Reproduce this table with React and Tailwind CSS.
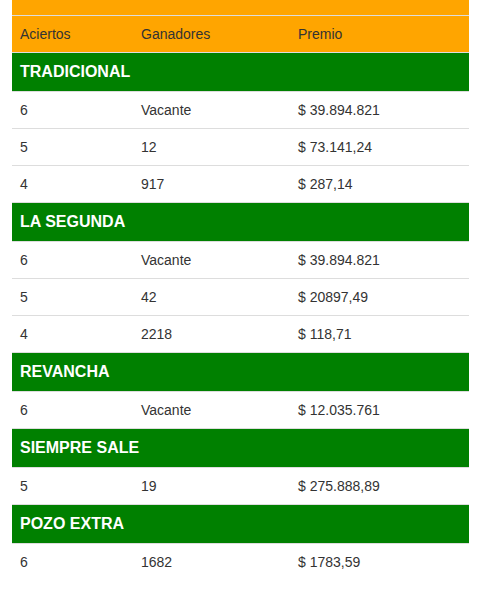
import React from "react";

const sections = [
  { title: "TRADICIONAL", rows: [["6", "Vacante", "$ 39.894.821"], ["5", "12", "$ 73.141,24"], ["4", "917", "$ 287,14"]] },
  { title: "LA SEGUNDA", rows: [["6", "Vacante", "$ 39.894.821"], ["5", "42", "$ 20897,49"], ["4", "2218", "$ 118,71"]] },
  { title: "REVANCHA", rows: [["6", "Vacante", "$ 12.035.761"]] },
  { title: "SIEMPRE SALE", rows: [["5", "19", "$ 275.888,89"]] },
  { title: "POZO EXTRA", rows: [["6", "1682", "$ 1783,59"]] },
];

function Row({ cells, className }) {
  return (
    <div className={"grid grid-cols-[121px_157px_179px] border-t border-[#dddddd] " + className}>
      {cells.map((c, i) => (
        <div key={i} className="px-2 py-2 leading-5 h-[36px] box-border">{c}</div>
      ))}
    </div>
  );
}

export default function App() {
  return (
    <div className="bg-white w-[482px] h-[599px] px-3 text-[14px] text-[#333333]" style={{ fontFamily: '"Liberation Sans", Arial, sans-serif' }}>
      <div className="w-[457px]">
        <div className="h-[15px] bg-[#ffa500]" />
        <Row cells={["Aciertos", "Ganadores", "Premio"]} className="bg-[#ffa500]" />
        {sections.map((s) => (
          <div key={s.title}>
            <div className="border-t border-[#dddddd] bg-[#008000] text-white font-bold text-[16px] leading-[22px] px-2 py-2">
              {s.title}
            </div>
            {s.rows.map((r, i) => (
              <Row key={i} cells={r} className="bg-white" />
            ))}
          </div>
        ))}
      </div>
    </div>
  );
}
